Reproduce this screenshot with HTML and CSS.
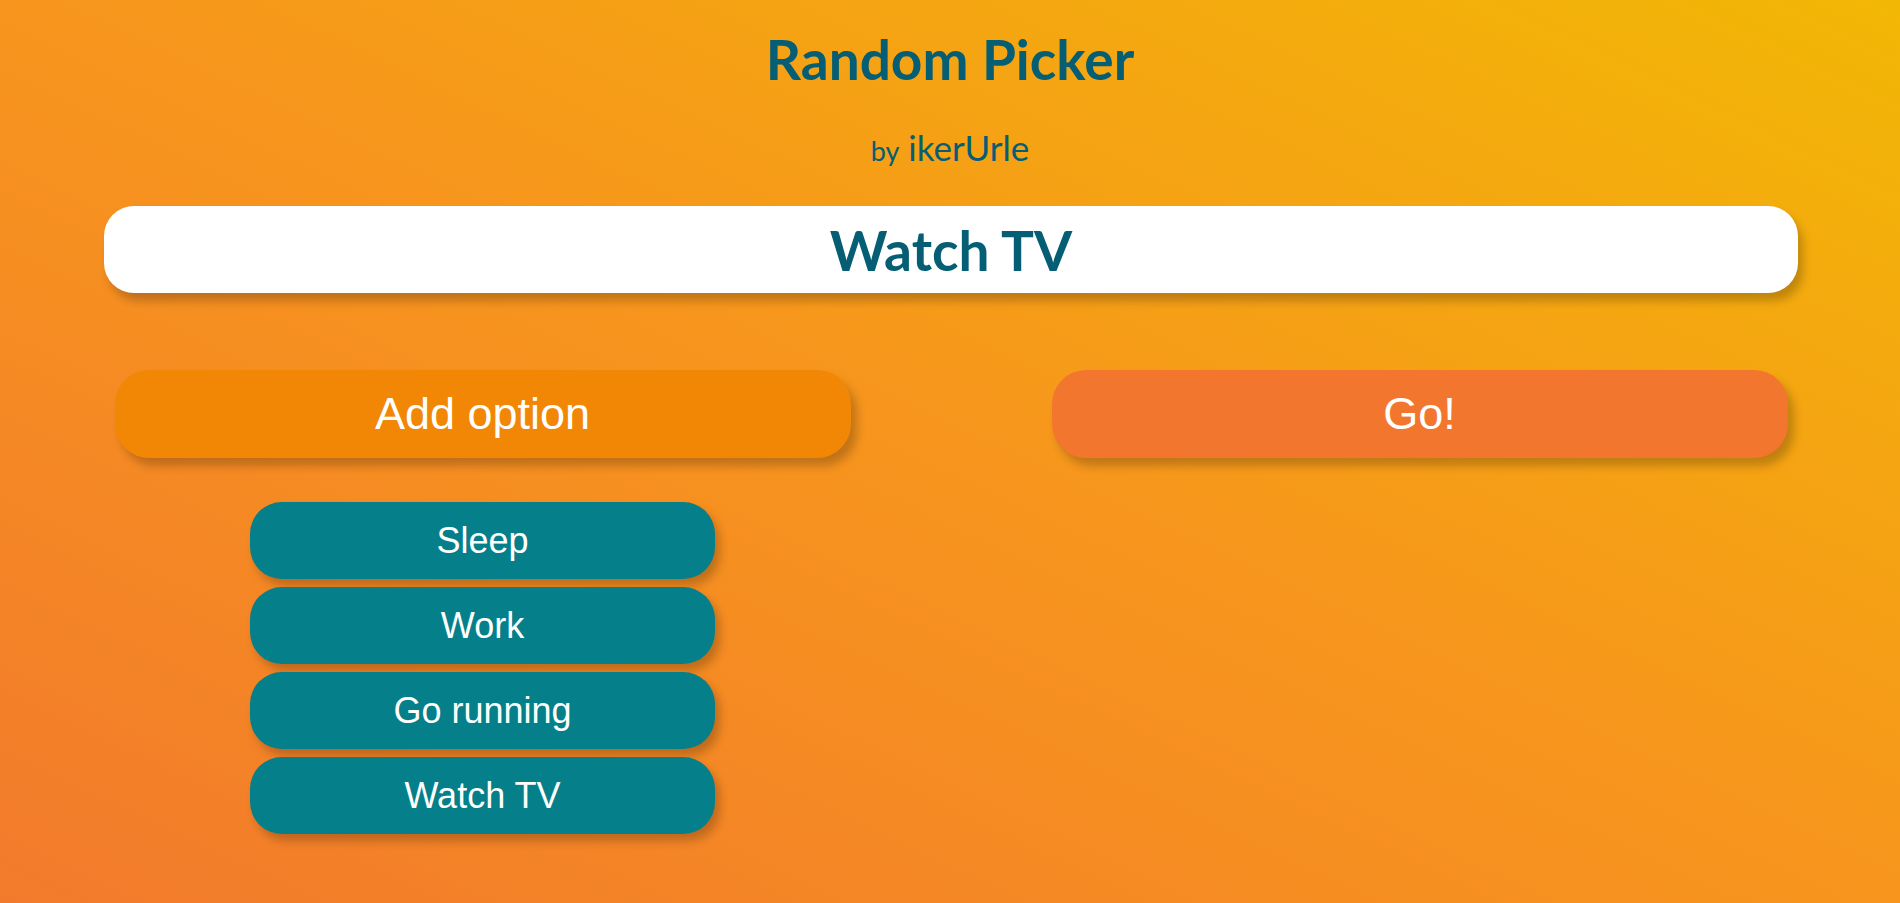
FILE: index.html
```html
<!DOCTYPE html>
<html lang="en">
<head>
<meta charset="utf-8">
<title>Random Picker</title>
<link rel="stylesheet" href="styles.css">
</head>
<body>
<main class="page">
  <header class="header">
    <h1 class="title">Random Picker</h1>
    <p class="byline"><span class="by">by</span> ikerUrle</p>
  </header>
  <div class="result">Watch TV</div>
  <section class="controls">
    <div class="column">
      <button class="btn btn-add">Add option</button>
      <ul class="options">
        <li class="option">Sleep</li>
        <li class="option">Work</li>
        <li class="option">Go running</li>
        <li class="option">Watch TV</li>
      </ul>
    </div>
    <div class="column">
      <button class="btn btn-go">Go!</button>
    </div>
  </section>
</main>
</body>
</html>
```
FILE: styles.css
```css
html, body {
  margin: 0;
  padding: 0;
  height: 100%;
}
body {
  background: linear-gradient(to top right, #f27a2c 0%, #f7951d 50%, #f2b705 100%);
  font-family: "Liberation Sans", Arial, sans-serif;
  overflow: hidden;
}
.page {
  display: flex;
  flex-direction: column;
}
.header {
  display: flex;
  flex-direction: column;
  align-items: center;
}
.title {
  margin: 26px 0 0;
  font-family: Lato, "Open Sans", sans-serif;
  font-weight: 700;
  font-size: 55px;
  line-height: 66px;
  color: #055e73;
}
.byline {
  margin: 35px 0 0;
  font-family: Lato, "Open Sans", sans-serif;
  font-weight: 400;
  font-size: 35px;
  line-height: 40px;
  color: #055e73;
}
.by {
  font-size: 27px;
}
.result {
  margin: 35px 102px 0 104px;
  height: 87px;
  background: #fff;
  border-radius: 30px;
  box-shadow: 5px 8px 10px rgba(0, 0, 0, 0.22);
  display: flex;
  align-items: center;
  justify-content: center;
  font-family: Lato, "Open Sans", sans-serif;
  font-weight: 700;
  font-size: 55px;
  color: #055e73;
}
.controls {
  display: grid;
  grid-template-columns: 1fr 1fr;
  padding: 0 12px 0 14px;
  margin-top: 77px;
}
.column {
  display: flex;
  flex-direction: column;
  align-items: center;
}
.btn {
  width: 736px;
  height: 88px;
  border: none;
  border-radius: 34px;
  color: #fff;
  font-family: "Liberation Sans", Arial, sans-serif;
  font-size: 45px;
  box-shadow: 6px 8px 10px rgba(0, 0, 0, 0.22);
  cursor: pointer;
}
.btn-add {
  background: #f28705;
}
.btn-go {
  background: #f2762e;
}
.options {
  list-style: none;
  margin: 44px 0 0;
  padding: 0;
  display: flex;
  flex-direction: column;
  gap: 8px;
}
.option {
  width: 465px;
  height: 77px;
  border-radius: 32px;
  background: #057f8a;
  color: #fff;
  font-size: 36px;
  display: flex;
  align-items: center;
  justify-content: center;
  box-shadow: 5px 7px 10px rgba(0, 0, 0, 0.22);
}
```
